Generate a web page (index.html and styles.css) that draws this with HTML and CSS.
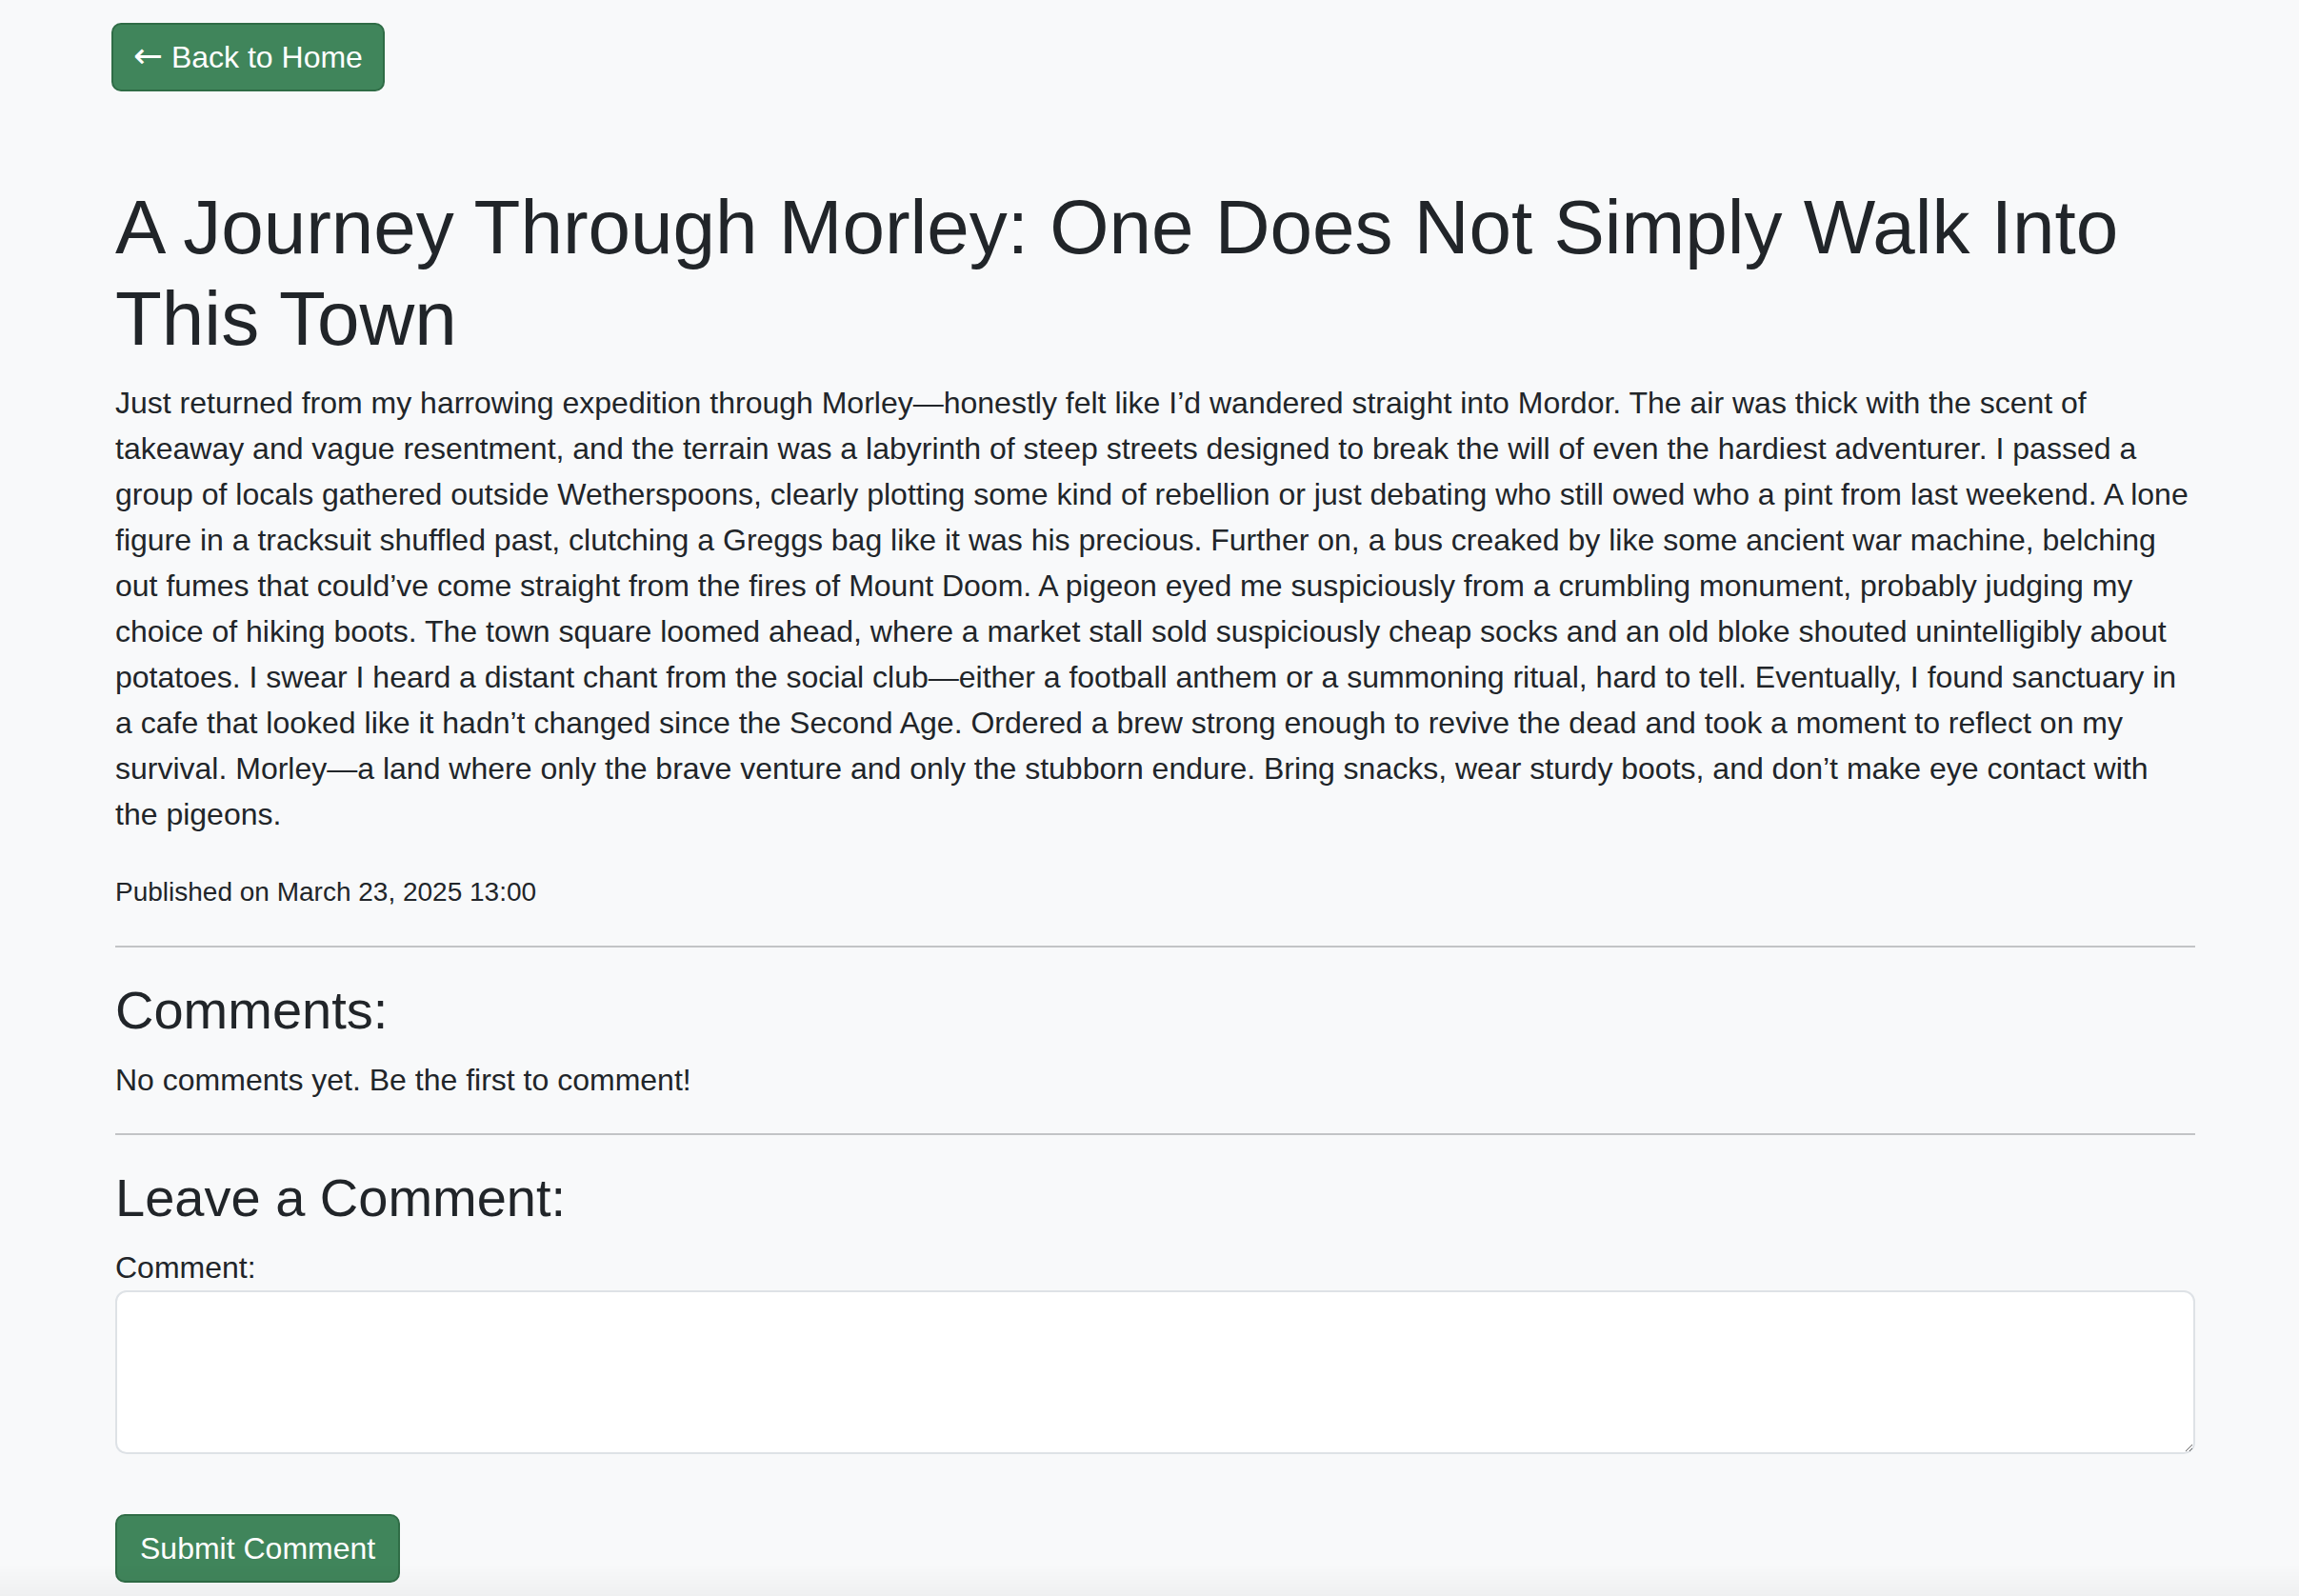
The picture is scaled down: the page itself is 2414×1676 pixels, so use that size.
FILE: index.html
```html
<!DOCTYPE html>
<html lang="en">
<head>
<meta charset="utf-8">
<title>A Journey Through Morley: One Does Not Simply Walk Into This Town</title>
<link rel="stylesheet" href="styles.css">
</head>
<body>
<div class="topbar">
  <a class="btn" href="#"><span class="arrow">←</span> Back to Home</a>
</div>
<main class="post">
  <h1 class="post-title">A Journey Through Morley: One Does Not Simply Walk Into This Town</h1>
  <p>Just returned from my harrowing expedition through Morley—honestly felt like I’d wandered straight into Mordor. The air was thick with the scent of takeaway and vague resentment, and the terrain was a labyrinth of steep streets designed to break the will of even the hardiest adventurer. I passed a group of locals gathered outside Wetherspoons, clearly plotting some kind of rebellion or just debating who still owed who a pint from last weekend. A lone figure in a tracksuit shuffled past, clutching a Greggs bag like it was his precious. Further on, a bus creaked by like some ancient war machine, belching out fumes that could’ve come straight from the fires of Mount Doom. A pigeon eyed me suspiciously from a crumbling monument, probably judging my choice of hiking boots. The town square loomed ahead, where a market stall sold suspiciously cheap socks and an old bloke shouted unintelligibly about potatoes. I swear I heard a distant chant from the social club—either a football anthem or a summoning ritual, hard to tell. Eventually, I found sanctuary in a cafe that looked like it hadn’t changed since the Second Age. Ordered a brew strong enough to revive the dead and took a moment to reflect on my survival. Morley—a land where only the brave venture and only the stubborn endure. Bring snacks, wear sturdy boots, and don’t make eye contact with the pigeons.</p>
  <p><small class="meta">Published on March 23, 2025 13:00</small></p>
  <hr class="rule">
  <h3 class="section-title">Comments:</h3>
  <p>No comments yet. Be the first to comment!</p>
  <hr class="rule">
  <h3 class="section-title">Leave a Comment:</h3>
  <form class="comment-form">
    <label class="form-label" for="comment">Comment:</label>
    <textarea class="form-control" id="comment" rows="3"></textarea>
    <div class="form-actions">
      <button class="btn btn-submit" type="submit">Submit Comment</button>
    </div>
  </form>
</main>
<div class="bottom-fade"></div>
</body>
</html>
```

FILE: styles.css
```css
html, body {
  margin: 0;
  padding: 0;
}

body {
  background: #f8f9fa;
  color: #212529;
  font-family: "Liberation Sans", Arial, Helvetica, sans-serif;
  font-size: 32px;
  line-height: 48px;
}

.topbar {
  display: flex;
  padding: 24px 0 0 117px;
}

.btn {
  display: inline-block;
  box-sizing: border-box;
  height: 72px;
  font-family: inherit;
  font-size: 32px;
  line-height: 48px;
  padding: 10px 21px;
  border: 2px solid #2f6c46;
  border-radius: 10px;
  background: #40855b;
  color: #ffffff;
  text-decoration: none;
  cursor: pointer;
}

.arrow {
  font-family: "DejaVu Sans", sans-serif;
  font-size: 37px;
  line-height: 0;
}

.btn-submit {
  padding: 10px 24px;
}

.post {
  width: 2184px;
  margin-left: 121px;
  padding-top: 95px;
}

.post-title {
  margin: 0 0 16px;
  font-size: 80px;
  line-height: 96px;
  font-weight: 400;
}

.post p {
  margin: 0 0 32px;
}

.meta {
  font-size: 28px;
}

.rule {
  margin: 32px 0;
  border: 0;
  border-top: 2px solid #c2c4c6;
  height: 0;
}

.section-title {
  margin: 0 0 16px;
  font-size: 56px;
  line-height: 67px;
  font-weight: 400;
}

.comment-form {
  margin: 0;
}

.form-label {
  display: block;
}

.form-control {
  display: block;
  box-sizing: border-box;
  width: 100%;
  height: 172px;
  margin: 0;
  padding: 12px 24px;
  border: 2px solid #dee2e6;
  border-radius: 12px;
  background: #ffffff;
  color: #212529;
  font-family: inherit;
  font-size: 32px;
  line-height: 48px;
}

.form-actions {
  display: flex;
  padding-top: 63px;
  padding-bottom: 40px;
}

.bottom-fade {
  position: fixed;
  left: 0;
  right: 0;
  bottom: 0;
  height: 34px;
  background: linear-gradient(to bottom, rgba(0, 0, 0, 0), rgba(0, 0, 0, 0.035));
  pointer-events: none;
}
```
